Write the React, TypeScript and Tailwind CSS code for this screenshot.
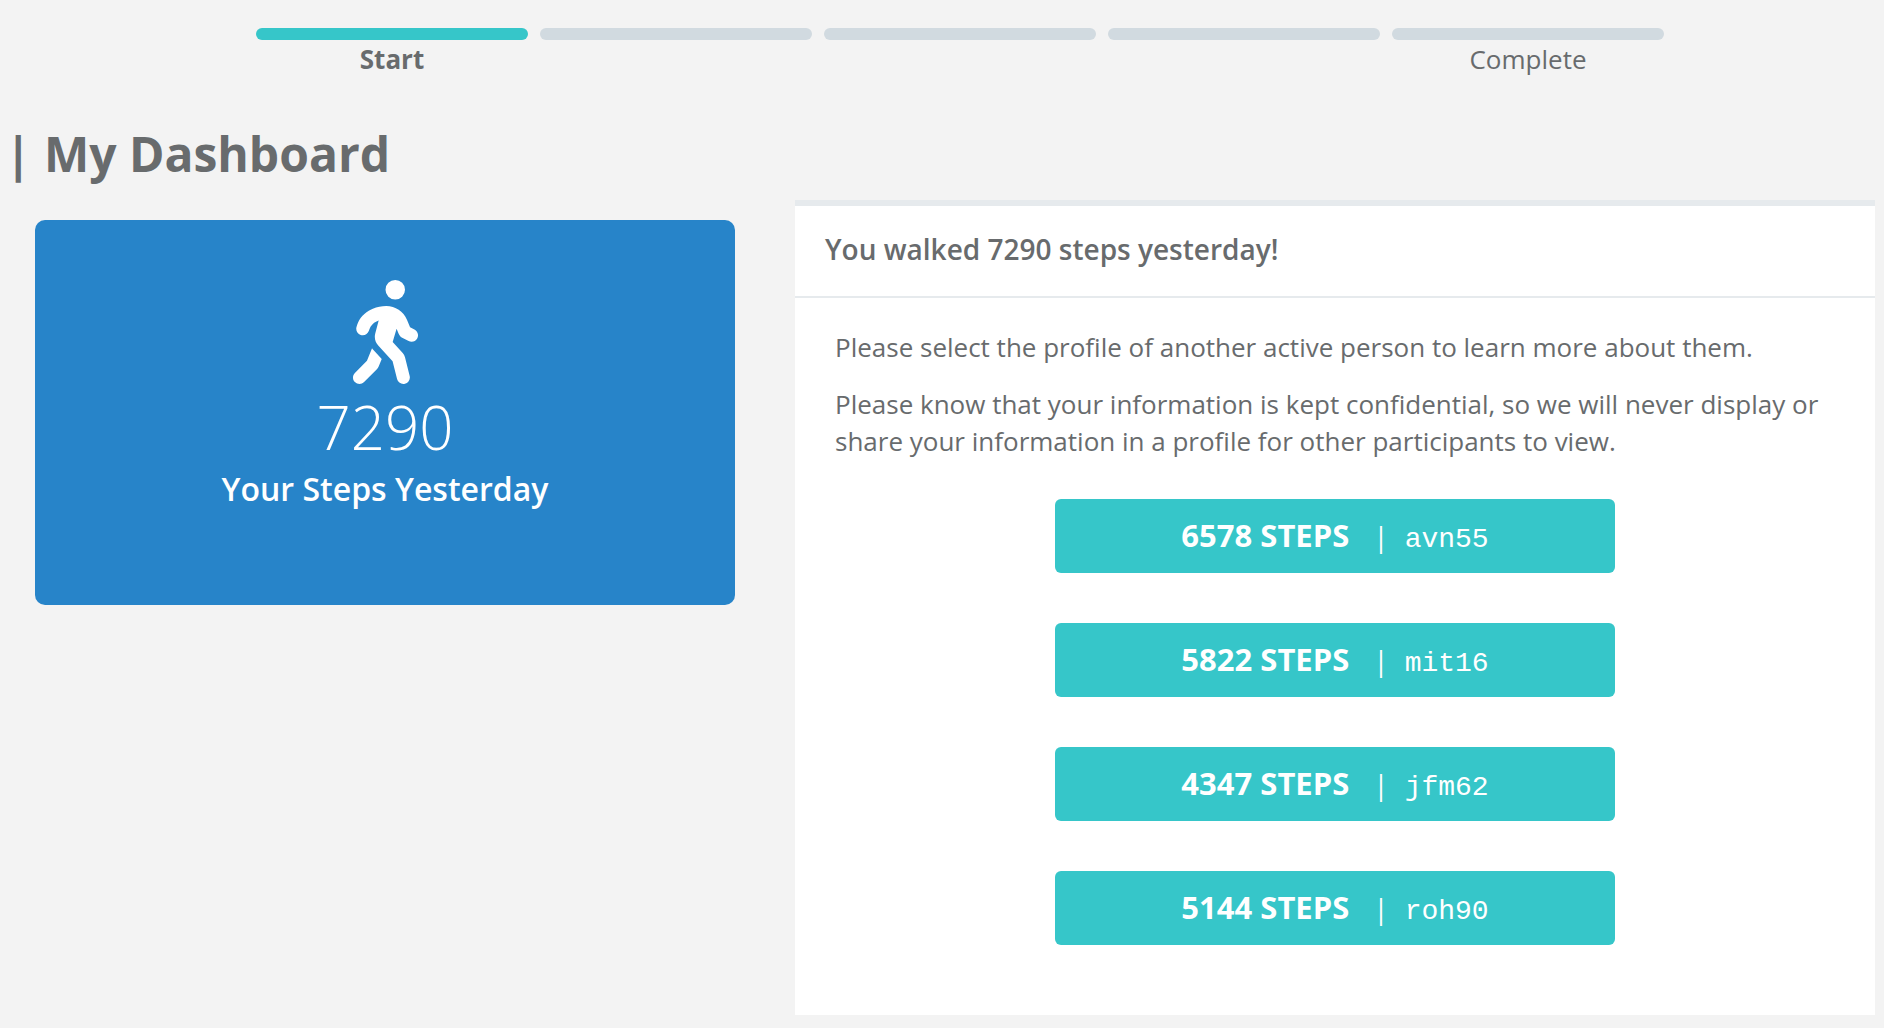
import { FaPersonWalking } from "react-icons/fa6";

const steps = [
  { label: "Start", active: true },
  { label: "", active: false },
  { label: "", active: false },
  { label: "", active: false },
  { label: "Complete", active: false },
];

const profiles = [
  { steps: 6578, id: "avn55" },
  { steps: 5822, id: "mit16" },
  { steps: 4347, id: "jfm62" },
  { steps: 5144, id: "roh90" },
];

function Progress() {
  return (
    <ol className="ml-9 grid w-3/4 max-w-[1408px] grid-cols-5 gap-3 self-center">
      {steps.map((step, i) => (
        <li key={i} className="text-center text-[26px] leading-[39px]">
          <div className={step.active ? "h-3 rounded-md bg-[#36c6c9]" : "h-3 rounded-md bg-[#d1dae0]"} />
          <span className={step.active ? "font-bold" : ""}>{step.label}</span>
        </li>
      ))}
    </ol>
  );
}

function StepsCard() {
  return (
    <section className="ml-[35px] mt-5 flex flex-[700] flex-col items-center rounded-[10px] bg-[#2784c9] pb-[97px] pt-[60px] text-white">
      <FaPersonWalking className="h-[104px] w-[65px]" aria-hidden="true" />
      <p className="text-[60px] font-light leading-[86px]">7290</p>
      <h2 className="text-[32px] font-semibold leading-[38px]">Your Steps Yesterday</h2>
    </section>
  );
}

function ProfilesPanel() {
  return (
    <section className="flex-[1080] border-t-[6px] border-[#e6eaed] bg-white pb-[70px]">
      <h2 className="border-b-2 border-[#e6eaed] px-[30px] pb-[28px] pt-[25px] text-[28px] font-semibold leading-[37px]">
        You walked 7290 steps yesterday!
      </h2>
      <div className="space-y-5 px-10 pt-[31px] text-[26px] leading-[37px]">
        <p>Please select the profile of another active person to learn more about them.</p>
        <p>
          Please know that your information is kept confidential, so we will never display or share your
          information in a profile for other participants to view.
        </p>
      </div>
      <div className="mt-[39px] flex flex-col items-center gap-[50px]">
        {profiles.map((p) => (
          <button
            key={p.id}
            type="button"
            className="flex h-[74px] w-[560px] items-baseline justify-center rounded-md bg-[#36c6c9] text-[28px] leading-[72px] text-white"
          >
            <span className="text-[31px] font-bold">{p.steps} STEPS</span>
            <span className="ml-6 mr-4">|</span>
            <span className="font-['Liberation_Mono',monospace]">{p.id}</span>
          </button>
        ))}
      </div>
    </section>
  );
}

export default function App() {
  return (
    <main className="flex min-h-screen flex-col bg-[#f3f3f3] pt-7 font-['Open_Sans',sans-serif] text-[#686b6d]">
      <Progress />
      <h1 className="ml-[5px] mt-[41px] text-[48px] font-bold leading-[68px]">| My Dashboard</h1>
      <div className="mr-[9px] mt-3 flex items-start gap-[60px]">
        <StepsCard />
        <ProfilesPanel />
      </div>
    </main>
  );
}
